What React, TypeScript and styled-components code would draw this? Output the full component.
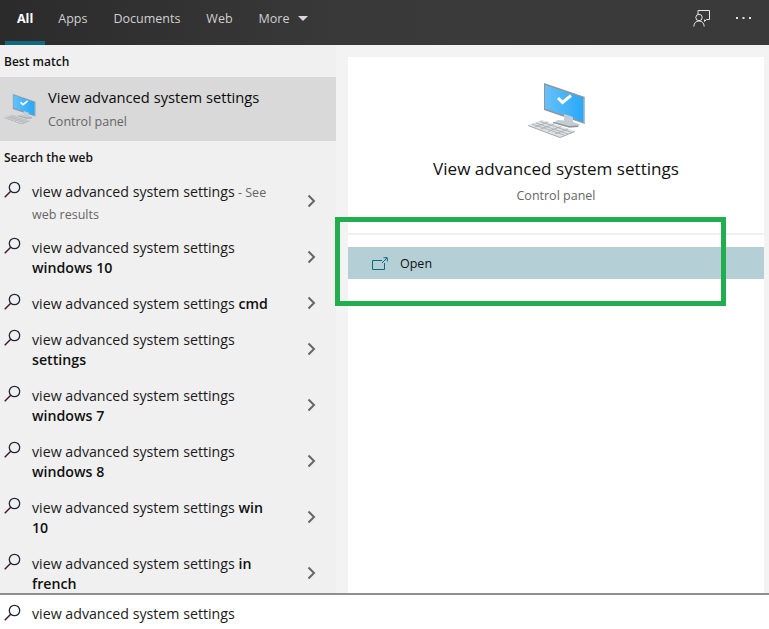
import React from "react";
import styled, { createGlobalStyle } from "styled-components";

const Global = createGlobalStyle`
  html, body { margin: 0; padding: 0; background: #fff; }
  body { font-family: "Open Sans", "Noto Sans", sans-serif; color: #111; }
  * { box-sizing: border-box; }
`;

const Page = styled.div`
  position: relative;
  width: 769px;
  height: 629px;
  display: flex;
  flex-direction: column;
  overflow: hidden;
  background: #f3f3f3;
`;

const Header = styled.header`
  height: 45px;
  flex: none;
  display: flex;
  align-items: stretch;
  justify-content: space-between;
  padding: 0 18px 0 5px;
  background: linear-gradient(to right, #2b2b2b, #393939 45%, #3a3a3a);
`;

const Tabs = styled.nav`
  display: flex;
`;

const Tab = styled.div<{ $active?: boolean }>`
  display: flex;
  align-items: center;
  gap: 9px;
  height: 45px;
  padding: 0 ${(p) => (p.$active ? 12 : 13)}px 5px;
  font-size: 12.5px;
  font-weight: ${(p) => (p.$active ? 700 : 400)};
  color: ${(p) => (p.$active ? "#ffffff" : "#d0d0d0")};
  border-bottom: 4px solid ${(p) => (p.$active ? "#0f6a80" : "transparent")};
`;

const Caret = styled.span`
  width: 0;
  height: 0;
  border-left: 5px solid transparent;
  border-right: 5px solid transparent;
  border-top: 5px solid #d8d8d8;
`;

const HeaderActions = styled.div`
  display: flex;
  align-items: center;
  gap: 26px;
  padding-bottom: 9px;
`;

const Body = styled.main`
  flex: 1;
  min-height: 0;
  display: flex;
  overflow: hidden;
`;

const LeftPane = styled.section`
  width: 348px;
  flex: none;
  background: linear-gradient(to right, #f0f0f0 336px, #f3f3f3 336px);
  overflow: hidden;
`;

const SectionLabel = styled.div`
  height: 32px;
  display: flex;
  align-items: center;
  padding-left: 4px;
  font-size: 12px;
  font-weight: 600;
  color: #111;
`;

const BestMatch = styled.div`
  width: 336px;
  height: 64px;
  display: flex;
  align-items: center;
  gap: 12px;
  padding-left: 4px;
  background: #d9d9d9;
`;

const BestMatchText = styled.div`
  display: flex;
  flex-direction: column;
  gap: 6px;
  padding-bottom: 1px;
`;

const BestMatchTitle = styled.div`
  font-size: 14.7px;
  line-height: 20px;
  font-weight: 500;
  color: #0c0c0c;
`;

const Secondary = styled.div`
  font-size: 12.5px;
  line-height: 18px;
  color: #666;
`;

const Results = styled.div`
  width: 336px;
`;

const Row = styled.div<{ $lines: number }>`
  display: flex;
  align-items: flex-start;
  height: ${(p) => (p.$lines === 1 ? 36 : 56)}px;
  padding: 8px 20px 0 4px;
`;

const RowText = styled.div<{ $hint?: boolean }>`
  padding-left: 6px;
  width: 252px;
  margin-top: 1px;
  font-size: 14.2px;
  line-height: ${(p) => (p.$hint ? 20.5 : 20)}px;
  color: #1a1a1a;
  strong { font-weight: 600; color: #111; }
`;

const Hint = styled.span`
  font-size: 12.5px;
  color: #666;
`;

const Chevron = styled.svg<{ $top: number }>`
  flex: none;
  margin-left: auto;
  margin-top: ${(p) => p.$top}px;
`;

const RightPane = styled.section`
  flex: 1;
  padding: 12px 5px 0 0;
  display: flex;
`;

const Card = styled.div`
  flex: 1;
  background: #fff;
  display: flex;
  flex-direction: column;
  align-items: stretch;
`;

const Hero = styled.div`
  height: 178px;
  padding: 26px 0 0 2px;
  display: flex;
  flex-direction: column;
  align-items: center;
  border-bottom: 2px solid #f0f0f0;
`;

const HeroTitle = styled.div`
  margin: 19px 2px 0 0;
  font-size: 17.1px;
  line-height: 24px;
  color: #111;
`;

const HeroSub = styled(Secondary)`
  margin: 6px 2px 0 0;
`;

const OpenRow = styled.div`
  margin-top: 12px;
  height: 32px;
  display: flex;
  align-items: center;
  gap: 12px;
  padding-left: 24px;
  background: #b4d0d6;
  font-size: 12.5px;
  color: #111;
`;

const SearchBar = styled.footer`
  height: 36px;
  flex: none;
  display: flex;
  align-items: center;
  padding: 4px 0 0 4px;
  background: #fff;
  border-top: 2px solid #8f8f8f;
`;

const SearchText = styled.div`
  padding: 0 0 2px 6px;
  font-size: 14.2px;
  color: #1a1a1a;
`;

const Highlight = styled.div`
  position: absolute;
  left: 335px;
  top: 217px;
  width: 391px;
  height: 89px;
  border: 5px solid #22ad4f;
  pointer-events: none;
`;

const SearchIcon = () => (
  <svg width="22" height="20" viewBox="0 0 22 20" fill="none" style={{ flex: "none" }}>
    <circle cx="10.5" cy="6.5" r="5.2" stroke="#1c2a38" strokeWidth="1.3" />
    <path d="M6.7 10.3 L0.7 16.3" stroke="#4a1a24" strokeWidth="1.5" />
  </svg>
);

const ChevronIcon = ({ top }: { top: number }) => (
  <Chevron $top={top} width="9" height="14" viewBox="0 0 9 14" fill="none">
    <path d="M1.5 1.5 L7 7 L1.5 12.5" stroke="#666" strokeWidth="2" />
  </Chevron>
);

const Computer = ({ width, faded }: { width: number; faded?: boolean }) => (
  <svg width={width} viewBox="0 0 58 55" style={{ flex: "none", display: "block" }}>
    <defs>
      <linearGradient id={faded ? "scrA" : "scrB"} x1="0" y1="0" x2="1" y2="0">
        <stop offset="0" stopColor="#66c0fb" />
        <stop offset="1" stopColor="#28a8f8" />
      </linearGradient>
    </defs>
    <path d="M16 0 L57 14 L57 41 L16 27 Z" fill="#8f979e" />
    <path d="M17 2 L55.5 15 L55.5 39 L17 25.5 Z" fill={`url(#${faded ? "scrA" : "scrB"})`} />
    <path d="M55.5 15 L57 14 L57 41 L55.5 39 Z" fill="#a9c2d2" />
    <path d="M36 31 L45 34 L45 39 L52 41.5 L50 44 L41 44.5 L25 40 L30 37 L36 37.5 Z" fill="#c5ccd2" />
    <path d="M25 40 L41 44.5 L50 44 L50 42.6 L41 43 L25 38.8 Z" fill="#8d9499" />
    <path d="M30 15 L34.5 19.5 L43 12.5" fill="none" stroke="#fff" strokeWidth="3" />
    <path d="M0 42 L14 37 L47 48 L32 54 Z" fill={faded ? "#d3d5d7" : "#dfe2e4"} />
    <path
      d="M4 41 L36 52 M8 40 L40 51 M12 38.5 L44 49.5 M7 44 L20 39 M13 46 L26 41 M20 48.5 L33 43.5 M27 51 L40 46"
      stroke="#a3a8ac"
      strokeWidth="0.8"
    />
    <path d="M0 42 L32 54 L47 48 L47 49 L32 55 L0 43 Z" fill="#9ea3a6" />
  </svg>
);

const rows: { bold?: string; hint?: boolean; lines: number }[] = [
  { hint: true, lines: 2 },
  { bold: "windows 10", lines: 2 },
  { bold: "cmd", lines: 1 },
  { bold: "settings", lines: 2 },
  { bold: "windows 7", lines: 2 },
  { bold: "windows 8", lines: 2 },
  { bold: "win 10", lines: 2 },
  { bold: "in french", lines: 2 },
];

export default function App() {
  return (
    <Page>
      <Global />
      <Header>
        <Tabs>
          <Tab $active>All</Tab>
          <Tab>Apps</Tab>
          <Tab>Documents</Tab>
          <Tab>Web</Tab>
          <Tab>
            More <Caret />
          </Tab>
        </Tabs>
        <HeaderActions>
          <svg width="17" height="17" viewBox="0 0 17 17" fill="none" stroke="#e4e4e4" strokeWidth="1">
            <path d="M5 4.5 V0.5 H16.5 V9.5 H13.5 L11.5 11.5 V9.5" />
            <circle cx="6" cy="7.5" r="3.2" />
            <path d="M0.8 16.5 C1 13 3 11 6 11 C9 11 11 13 11.2 16.5" />
          </svg>
          <svg width="15" height="4" viewBox="0 0 15 4" fill="#e4e4e4">
            <rect x="0" y="1" width="2" height="2" />
            <rect x="6.5" y="1" width="2" height="2" />
            <rect x="13" y="1" width="2" height="2" />
          </svg>
        </HeaderActions>
      </Header>
      <Body>
        <LeftPane>
          <SectionLabel>Best match</SectionLabel>
          <BestMatch>
            <Computer width={32} faded />
            <BestMatchText>
              <BestMatchTitle>View advanced system settings</BestMatchTitle>
              <Secondary>Control panel</Secondary>
            </BestMatchText>
          </BestMatch>
          <SectionLabel>Search the web</SectionLabel>
          <Results>
            {rows.map((r, i) => (
              <Row key={i} $lines={r.lines}>
                <SearchIcon />
                <RowText $hint={r.hint}>
                  view advanced system settings
                  {r.bold && (
                    <>
                      {" "}
                      <strong>{r.bold}</strong>
                    </>
                  )}
                  {r.hint && <Hint> - See web results</Hint>}
                </RowText>
                <ChevronIcon top={r.lines === 1 ? 3 : 13} />
              </Row>
            ))}
          </Results>
        </LeftPane>
        <RightPane>
          <Card>
            <Hero>
              <Computer width={58} />
              <HeroTitle>View advanced system settings</HeroTitle>
              <HeroSub>Control panel</HeroSub>
            </Hero>
            <OpenRow>
              <svg width="16" height="13" viewBox="0 0 16 13" fill="none" stroke="#0f6a80" strokeWidth="1">
                <path d="M10 3.5 H0.5 V12.5 H12.5 V6" />
                <path d="M10 6 L15 1 M11.5 0.7 H15.3 V4.5" />
              </svg>
              Open
            </OpenRow>
          </Card>
        </RightPane>
      </Body>
      <SearchBar>
        <SearchIcon />
        <SearchText>view advanced system settings</SearchText>
      </SearchBar>
      <Highlight />
    </Page>
  );
}
